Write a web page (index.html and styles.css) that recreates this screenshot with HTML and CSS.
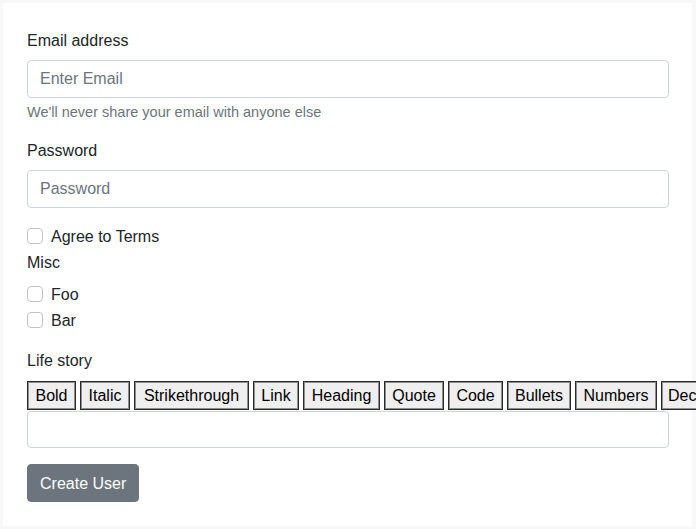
FILE: index.html
```html
<!DOCTYPE html>
<html>
<head>
<meta charset="utf-8">
<link rel="stylesheet" href="styles.css">
</head>
<body>
<div class="page">
  <form class="card">
    <div class="group">
      <label class="label">Email address</label>
      <input class="control" type="email" placeholder="Enter Email">
      <div class="help">We'll never share your email with anyone else</div>
    </div>
    <div class="group">
      <label class="label">Password</label>
      <input class="control" type="password" placeholder="Password">
    </div>
    <div class="check"><span class="box"></span><span class="check-text">Agree to Terms</span></div>
    <div class="misc-label">Misc</div>
    <div class="check"><span class="box"></span><span class="check-text">Foo</span></div>
    <div class="check"><span class="box"></span><span class="check-text">Bar</span></div>
    <div class="story">
      <label class="label">Life story</label>
      <div class="toolbar">
        <button type="button" class="tb tb-bold">Bold</button>
        <button type="button" class="tb tb-italic">Italic</button>
        <button type="button" class="tb tb-strike">Strikethrough</button>
        <button type="button" class="tb tb-link">Link</button>
        <button type="button" class="tb tb-heading">Heading</button>
        <button type="button" class="tb tb-quote">Quote</button>
        <button type="button" class="tb tb-code">Code</button>
        <button type="button" class="tb tb-bullets">Bullets</button>
        <button type="button" class="tb tb-numbers">Numbers</button>
        <button type="button" class="tb tb-dec">Decrease Level</button>
      </div>
      <div class="editor"></div>
    </div>
    <button type="button" class="submit">Create User</button>
  </form>
</div>
</body>
</html>
```
FILE: styles.css
```css
html, body {
  margin: 0;
  padding: 0;
  overflow: hidden;
}
body {
  background: #f8f8f8;
  font-family: "Liberation Sans", Arial, sans-serif;
  font-size: 16px;
  line-height: 24px;
  color: #212529;
}
.page {
  padding: 3px 4px 3px 3px;
}
.card {
  background: #fff;
  padding: 25px 23px 24px 24px;
  display: flex;
  flex-direction: column;
  margin: 0;
}
.group {
  display: flex;
  flex-direction: column;
  margin-bottom: 16px;
}
.label {
  display: block;
  padding-top: 1px;
  margin-bottom: 7px;
}
.control {
  box-sizing: border-box;
  height: 38px;
  width: 100%;
  border: 1px solid #ced4da;
  border-radius: 4px;
  padding: 6px 12px;
  font: inherit;
  color: #212529;
  outline: none;
}
.control::placeholder {
  color: #6c757d;
}
.help {
  margin-top: 4px;
  font-size: 14.5px;
  line-height: 20px;
  color: #6c757d;
}
.check {
  display: flex;
  align-items: center;
  gap: 8px;
  height: 24px;
  margin-bottom: 2px;
}
.check-text {
  padding-top: 2px;
}
.box {
  box-sizing: border-box;
  width: 16px;
  height: 16px;
  border: 1px solid #bfc3c7;
  border-radius: 4px;
  background: #fff;
}
.misc-label {
  padding-top: 1px;
  margin-bottom: 7px;
}
.story {
  margin-top: 14px;
  display: flex;
  flex-direction: column;
}
.story .label {
  margin-bottom: 8px;
}
.toolbar {
  display: flex;
  gap: 4px;
  height: 29px;
  white-space: nowrap;
}
.tb {
  flex: 0 0 auto;
  box-sizing: border-box;
  font-family: "Liberation Sans", Arial, sans-serif;
  font-size: 16px;
  line-height: 21px;
  height: 29px;
  padding: 1px 6px;
  margin: 0;
  background: #efefef;
  color: #000;
  border: 1px solid #2a2a2a;
  box-shadow: inset 0 0 0 1px #8f8f8f;
  border-radius: 0;
  text-align: center;
}
.tb-bold { width: 49px; }
.tb-italic { width: 50px; }
.tb-strike { width: 115px; }
.tb-link { width: 46px; }
.tb-heading { width: 77px; }
.tb-quote { width: 60px; }
.tb-code { width: 55px; }
.tb-bullets { width: 64px; }
.tb-numbers { width: 82px; }
.tb-dec { width: 122px; }
.editor {
  box-sizing: border-box;
  height: 37px;
  border: 1px solid #ced4da;
  border-radius: 4px;
  margin-top: 1px;
}
.submit {
  align-self: flex-start;
  margin-top: 16px;
  height: 38px;
  padding: 7px 12px 5px;
  border: 1px solid #6c757d;
  border-radius: 4px;
  background: #6c757d;
  color: #fff;
  font-family: "Liberation Sans", Arial, sans-serif;
  font-size: 16px;
  line-height: 24px;
}
```
